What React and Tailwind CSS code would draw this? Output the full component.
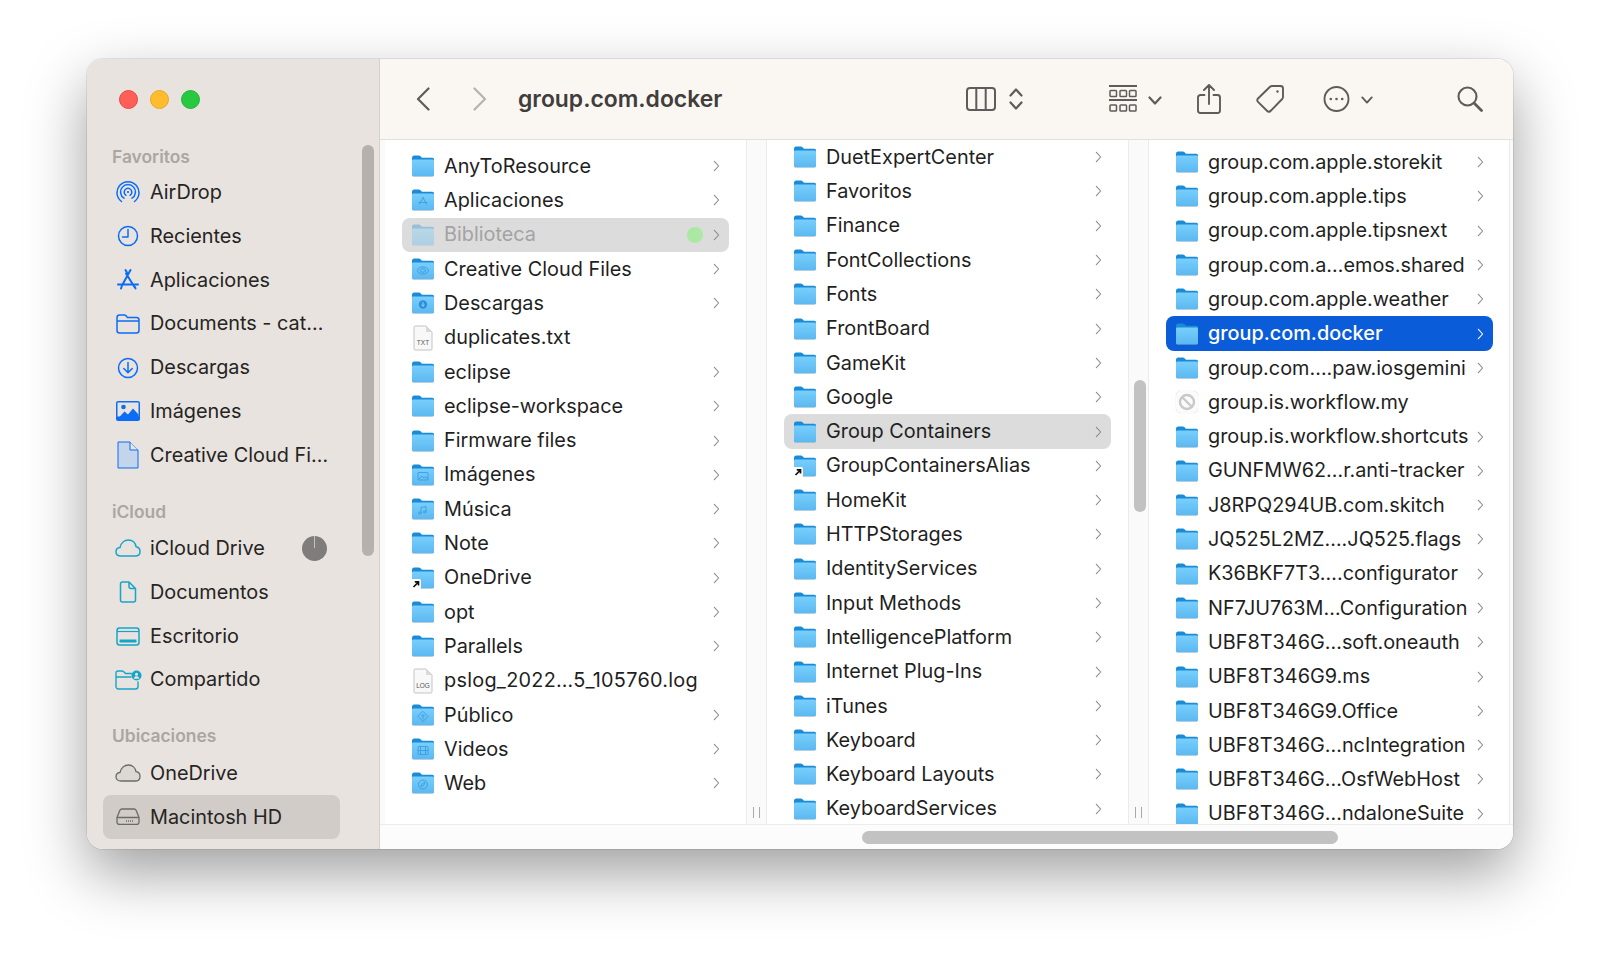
const col1 = [
  { name: 'AnyToResource' },
  { name: 'Aplicaciones', glyph: 'app' },
  { name: 'Biblioteca', state: 'dim' },
  { name: 'Creative Cloud Files', glyph: 'cc' },
  { name: 'Descargas', glyph: 'down' },
  { name: 'duplicates.txt', file: 'TXT' },
  { name: 'eclipse' },
  { name: 'eclipse-workspace' },
  { name: 'Firmware files' },
  { name: 'Imágenes', glyph: 'image' },
  { name: 'Música', glyph: 'music' },
  { name: 'Note' },
  { name: 'OneDrive', alias: true },
  { name: 'opt' },
  { name: 'Parallels' },
  { name: 'pslog_2022…5_105760.log', file: 'LOG', wide: true },
  { name: 'Público', glyph: 'public' },
  { name: 'Videos', glyph: 'film' },
  { name: 'Web', glyph: 'web' },
]

const col2 = [
  { name: 'DuetExpertCenter' },
  { name: 'Favoritos' },
  { name: 'Finance' },
  { name: 'FontCollections' },
  { name: 'Fonts' },
  { name: 'FrontBoard' },
  { name: 'GameKit' },
  { name: 'Google' },
  { name: 'Group Containers', state: 'gray' },
  { name: 'GroupContainersAlias', alias: true },
  { name: 'HomeKit' },
  { name: 'HTTPStorages' },
  { name: 'IdentityServices' },
  { name: 'Input Methods' },
  { name: 'IntelligencePlatform' },
  { name: 'Internet Plug-Ins' },
  { name: 'iTunes' },
  { name: 'Keyboard' },
  { name: 'Keyboard Layouts' },
  { name: 'KeyboardServices' },
]

const col3 = [
  { name: 'group.com.apple.storekit' },
  { name: 'group.com.apple.tips' },
  { name: 'group.com.apple.tipsnext' },
  { name: 'group.com.a…emos.shared' },
  { name: 'group.com.apple.weather' },
  { name: 'group.com.docker', state: 'blue' },
  { name: 'group.com….paw.iosgemini' },
  { name: 'group.is.workflow.my', blocked: true },
  { name: 'group.is.workflow.shortcuts' },
  { name: 'GUNFMW62…r.anti-tracker' },
  { name: 'J8RPQ294UB.com.skitch' },
  { name: 'JQ525L2MZ….JQ525.flags' },
  { name: 'K36BKF7T3….configurator' },
  { name: 'NF7JU763M…Configuration' },
  { name: 'UBF8T346G…soft.oneauth' },
  { name: 'UBF8T346G9.ms' },
  { name: 'UBF8T346G9.Office' },
  { name: 'UBF8T346G…ncIntegration' },
  { name: 'UBF8T346G…OsfWebHost' },
  { name: 'UBF8T346G…ndaloneSuite' },
]

const Glyph = ({ type }) => {
  const p = { fill: 'none', stroke: '#3a9be0', strokeWidth: 1, strokeLinecap: 'round', opacity: 0.85 }
  if (type === 'app') return <path {...p} d="M11 8.500 7.500 15M11 8.500l3.500 6.500M7 13.500h8" />
  if (type === 'cc') return <g {...p}><ellipse cx="11" cy="12.500" rx="5.500" ry="3.600" /><ellipse cx="11" cy="12.500" rx="2.600" ry="1.800" /></g>
  if (type === 'down') return <g><circle cx="11" cy="12.500" r="4.200" fill="#2f8fd8" /><path d="M11 10.200v4M9.400 12.800l1.600 1.500 1.600-1.500" fill="none" stroke="#8fd6fb" strokeWidth="1" /></g>
  if (type === 'image') return <g {...p}><rect x="6" y="8.500" width="10" height="7.500" rx="0.800" /><path d="m7 15 3-3 2 2 1.500-1.500L15.500 15" /></g>
  if (type === 'music') return <path {...p} d="M9 15V9.500l5-1V14M9 15a1.300 1 0 1 1-2.600 0 1.300 1 0 0 1 2.600 0ZM14 14a1.300 1 0 1 1-2.600 0 1.300 1 0 0 1 2.600 0Z" />
  if (type === 'public') return <g {...p}><path d="m11 7.500 5 5-5 5-5-5Z" /><path d="M11 15v-4.500M9.500 12l1.500-1.500 1.500 1.500" /></g>
  if (type === 'film') return <g {...p}><rect x="6" y="8.500" width="10" height="8" rx="0.800" /><path d="M6 12.500h10M8.500 8.500v8M13.500 8.500v8" /></g>
  if (type === 'web') return <g {...p}><circle cx="11" cy="12.500" r="4.500" /><path d="m13 10.500-1.200 2.800-2.800 1.200 1.200-2.800Z" /></g>
  return null
}

const Folder = ({ glyph, dim, alias }) => (
  <span className={`relative shrink-0 w-[22px] h-[22px] ${dim ? 'opacity-35' : ''}`}>
    <svg viewBox="0 0 22 22" width="22" height="22">
      <rect x="0.300" y="3" width="21.400" height="18.800" rx="1.500" fill="#9aa5ad" opacity="0.6" />
      <path d="M0 3.200C0 1.800.8 .6 2.200 .6h4.600c.8 0 1.200.2 1.700.7L10 2.800h10.300c1 0 1.700.7 1.700 1.700V8H0Z" fill="#1a8bd8" />
      <rect x="0" y="4.500" width="22" height="16.700" rx="1.300" fill="url(#folderfill)" />
      <Glyph type={glyph} />
    </svg>
    {alias && (
      <svg viewBox="0 0 10 10" width="10" height="10" className="absolute -left-px bottom-0">
        <rect width="10" height="10" rx="1.500" fill="#fff" />
        <path d="M2.500 8 7 3.500M3.800 2.800h3.700v3.700" fill="none" stroke="#111" strokeWidth="1.700" />
      </svg>
    )}
  </span>
)

const FileIcon = ({ label }) => (
  <span className="relative shrink-0 w-[22px] h-[26px] flex justify-center">
    <svg viewBox="0 0 20 26" width="20" height="26">
      <path d="M1 2.200C1 1.500 1.500 1 2.200 1H13l6 6v17c0 .6-.5 1-1 1H2.200c-.7 0-1.200-.4-1.200-1Z" fill="#f8f8f8" stroke="#bdbdbd" strokeWidth="0.900" />
      <path d="M13 1v5c0 .6.400 1 1 1h5Z" fill="#d9d9d9" />
    </svg>
    <span className="absolute bottom-[4px] left-0 right-0 text-center text-[6.500px] leading-none text-[#555555] font-['Liberation_Sans',sans-serif]">{label}</span>
  </span>
)

const BlockedIcon = () => (
  <span className="shrink-0 w-[22px] h-[22px] rounded-[5px] bg-[#fbfbfb] flex items-center justify-center shadow-[0_0_1px_rgba(0,0,0,0.25)]">
    <svg viewBox="0 0 18 18" width="18" height="18">
      <circle cx="9" cy="9" r="7" fill="none" stroke="#c9c9c9" strokeWidth="2.400" />
      <path d="m4.500 4.500 9 9" stroke="#c9c9c9" strokeWidth="2.400" />
    </svg>
  </span>
)

const Chevron = ({ white }) => (
  <svg viewBox="0 0 8 14" width="7" height="12" className="shrink-0">
    <path d="m1.500 1.500 5 5.500-5 5.500" fill="none" stroke={white ? '#ffffff' : '#8c8c8c'} strokeWidth="1.300" strokeLinecap="round" strokeLinejoin="round" />
  </svg>
)

function FileRow({ item, padRight }) {
  const { name, glyph, file, alias, blocked, state, wide } = item
  let rowBg = ''
  if (state === 'dim' || state === 'gray') rowBg = 'bg-[#dcdcdc] rounded-lg'
  if (state === 'blue') rowBg = 'bg-[#0b5cd9] rounded-lg'
  let textColor = 'text-[#1f1f1f]'
  if (state === 'dim') textColor = 'text-[#a3a3a3]'
  if (state === 'blue') textColor = 'text-white font-medium'

  return (
    <div className={`ml-[17px] h-[34.3px] flex items-center pl-[10px] ${padRight} ${rowBg}`}>
      {file ? <FileIcon label={file} /> : blocked ? <BlockedIcon /> : <Folder glyph={glyph} dim={state === 'dim'} alias={alias} />}
      <span className={`ml-[10px] pt-px flex-1 whitespace-nowrap text-[19.850px] ${wide ? 'tracking-[0.27px]' : ''} ${textColor}`}>{name}</span>
      {state === 'dim' && <span className="w-[16px] h-[16px] rounded-full bg-[#abe8a4] mr-[10px]" />}
      {!file && !blocked && <Chevron white={state === 'blue'} />}
    </div>
  )
}

function Column({ rows, className, padRight }) {
  return (
    <div className={`w-[361px] shrink-0 overflow-hidden bg-white ${className}`}>
      {rows.map((r) => <FileRow key={r.name} item={r} padRight={padRight} />)}
    </div>
  )
}

function Divider({ thumb }) {
  return (
    <div className="relative w-[21px] shrink-0 bg-[#fafafa] border-x border-[#ebebeb]">
      {thumb && <div className="absolute left-[5px] top-[240px] w-[12px] h-[132px] rounded-full bg-[#c2c2c2]" />}
      <div className="absolute left-[6px] bottom-[6px] w-[7px] h-[11px] border-x border-[#a9a9a9]" />
    </div>
  )
}

const blue = '#0b6cf6'
const teal = '#16a5c8'
const gray = '#6c6a68'

const SideIcon = ({ type }) => {
  const line = { fill: 'none', strokeLinecap: 'round', strokeLinejoin: 'round' }
  switch (type) {
    case 'airdrop':
      return (
        <svg viewBox="0 0 24 24" width="24" height="24" {...line} stroke={blue} strokeWidth="1.500">
          <path d="M5.500 21.500a11 11 0 1 1 13 0M8 18.200a7.400 7.400 0 1 1 8 0M9.900 15.300a3.800 3.800 0 1 1 4.200 0" />
          <circle cx="12" cy="12" r="1.100" fill={blue} stroke="none" />
        </svg>
      )
    case 'clock':
      return (
        <svg viewBox="0 0 24 24" width="24" height="24" {...line} stroke={blue} strokeWidth="1.500">
          <circle cx="12" cy="12" r="9.500" />
          <path d="M12 5.500V13H6.500" />
        </svg>
      )
    case 'apps':
      return (
        <svg viewBox="0 0 24 24" width="24" height="24" {...line} stroke={blue} strokeWidth="2">
          <path d="M9.500 2 11.500 5.500M14.500 2 6 17.500M10 5.500l8.500 13.500M2 16.500h20M6 17.500 5 20.500M19 19l.5 1.500" />
        </svg>
      )
    case 'folder':
      return (
        <svg viewBox="0 0 24 20" width="24" height="20" {...line} stroke={blue} strokeWidth="1.500">
          <path d="M1 3.500C1 2 2 1 3.500 1h4.800c.7 0 1.200.2 1.700.7L11.500 3.500h9c1.500 0 2.500 1 2.500 2.500v10.500c0 1.500-1 2.500-2.500 2.500h-17C2 19 1 18 1 16.500ZM1 7h22" />
        </svg>
      )
    case 'download':
      return (
        <svg viewBox="0 0 24 24" width="24" height="24" {...line} stroke={blue} strokeWidth="1.500">
          <circle cx="12" cy="12" r="9.500" />
          <path d="M12 6.500v10M7.800 12.500l4.200 4.200 4.200-4.200" />
        </svg>
      )
    case 'image':
      return (
        <svg viewBox="0 0 24 20" width="24" height="20">
          <rect x="0" y="0" width="24" height="20" rx="2" fill={blue} />
          <rect x="1.500" y="1.500" width="21" height="14" fill="#e8e3df" />
          <circle cx="7.500" cy="6" r="2.300" fill={blue} />
          <path d="M1.500 18 8.500 10.500l3.500 3 5-6 5.500 6V18Z" fill={blue} />
        </svg>
      )
    case 'ccfile':
      return (
        <svg viewBox="0 0 22 28" width="22" height="28">
          <path d="M1 1h12l8 8v18H1Z" fill="#c4d4ea" stroke={blue} strokeWidth="1" strokeLinejoin="round" />
          <path d="M13 1v8h8" fill="#e8e3df" stroke={blue} strokeWidth="1" strokeLinejoin="round" />
        </svg>
      )
    case 'cloud':
      return (
        <svg viewBox="0 0 26 18" width="26" height="18" {...line} stroke={teal} strokeWidth="1.500">
          <path d="M6 17c-3 0-5-1.800-5-4.300 0-2.300 1.700-4 4-4.200C6 4 9.500 1 13.500 1c4 0 7 2.800 7.500 6.700 2.400.3 4 2.200 4 4.700 0 2.800-2 4.600-5 4.600Z" />
        </svg>
      )
    case 'doc':
      return (
        <svg viewBox="0 0 18 22" width="18" height="22" {...line} stroke={teal} strokeWidth="1.500">
          <path d="M1.500 3c0-1.200.8-2 2-2H10l6.500 6.500V19c0 1.200-.8 2-2 2h-11c-1.200 0-2-.8-2-2ZM10 1v4.500c0 1.200.8 2 2 2h4.500" />
        </svg>
      )
    case 'desktop':
      return (
        <svg viewBox="0 0 24 19" width="24" height="19">
          <rect x="1" y="1" width="22" height="17" rx="2.500" fill="none" stroke={teal} strokeWidth="1.500" />
          <path d="M1 4.500h22" stroke={teal} strokeWidth="1.200" />
          <rect x="3.500" y="12.500" width="17" height="3" fill={teal} />
        </svg>
      )
    case 'shared':
      return (
        <svg viewBox="0 0 27 20" width="27" height="20" {...line}>
          <path d="M1 3c0-1.200.8-2 2-2h4c.7 0 1.200.2 1.700.7L10.500 3.500h6M1 7h15M23 12v4.500c0 1.400-1 2.500-2.500 2.500H3.500C2 19 1 18 1 16.500V3" stroke={teal} strokeWidth="1.400" />
          <circle cx="21.500" cy="5.500" r="5" fill={teal} />
          <circle cx="21.500" cy="4.200" r="1.500" fill="#e8e3df" />
          <path d="M18.800 8.800c.3-2 1.300-2.600 2.700-2.600s2.400.6 2.700 2.600Z" fill="#e8e3df" />
        </svg>
      )
    case 'onedrive':
      return (
        <svg viewBox="0 0 26 18" width="26" height="18" strokeLinejoin="round">
          <path d="M6 17c-3 0-5-1.800-5-4.300 0-2.300 1.700-4 4-4.200C6 4 9.500 1 13.500 1c4 0 7 2.800 7.500 6.700 2.400.3 4 2.200 4 4.700 0 2.800-2 4.600-5 4.600Z" fill="#dcd8d4" stroke={gray} strokeWidth="1.300" />
        </svg>
      )
    case 'disk':
      return (
        <svg viewBox="0 0 24 17" width="24" height="17" fill="none" stroke={gray} strokeWidth="1.300" strokeLinejoin="round">
          <path d="M6 1h12c1 0 1.700.5 2.100 1.300L23 9.500v4.500c0 1.500-1 2.500-2.500 2.500h-17C2 16.500 1 15.500 1 14V9.500l2.900-7.200C4.300 1.500 5 1 6 1Z" />
          <path d="M1.200 9.500h21.600" />
          <path d="M10 13h8" strokeDasharray="1 1" strokeWidth="1.600" />
        </svg>
      )
    default:
      return null
  }
}

function SideRow({ icon, label, active, children }) {
  return (
    <div className={`ml-4 w-[237px] h-[43.800px] flex items-center gap-1 pl-[7px] rounded-lg ${active ? 'bg-[#d1ccc8]' : ''}`}>
      <span className="w-[36px] flex justify-center shrink-0"><SideIcon type={icon} /></span>
      <span className="flex-1 pt-px text-[19.850px] text-[#262423] whitespace-nowrap">{label}</span>
      {children}
    </div>
  )
}

const SideHead = ({ children, className }) => (
  <div className={`pl-[25px] flex items-center text-[17.400px] font-semibold text-[#aaa6a3] ${className}`}>{children}</div>
)

function Sidebar() {
  return (
    <aside className="relative w-[293px] shrink-0 bg-[#e8e3df] border-r border-[#d6d1cd]">
      <div className="h-[83px] flex items-center gap-[12px] pl-[32px] pb-[3px]">
        <span className="w-[19px] h-[19px] rounded-full bg-[#ff5f57] border border-[#e5483f]" />
        <span className="w-[19px] h-[19px] rounded-full bg-[#febc2e] border border-[#e8a91f]" />
        <span className="w-[19px] h-[19px] rounded-full bg-[#28c840] border border-[#22b537]" />
      </div>
      <SideHead className="h-[28.500px] pt-px">Favoritos</SideHead>
      <SideRow icon="airdrop" label="AirDrop" />
      <SideRow icon="clock" label="Recientes" />
      <SideRow icon="apps" label="Aplicaciones" />
      <SideRow icon="folder" label="Documents - cat…" />
      <SideRow icon="download" label="Descargas" />
      <SideRow icon="image" label="Imágenes" />
      <SideRow icon="ccfile" label="Creative Cloud Fi…" />
      <SideHead className="h-[28px] mt-[21.500px] pb-[2px]">iCloud</SideHead>
      <SideRow icon="cloud" label="iCloud Drive">
        <span className="relative w-[25px] h-[25px] rounded-full bg-[#7f7d7b] mr-[13px] shrink-0">
          <span className="absolute left-[12px] top-0 w-px h-[12px] bg-[#c4c2c0]" />
        </span>
      </SideRow>
      <SideRow icon="doc" label="Documentos" />
      <SideRow icon="desktop" label="Escritorio" />
      <SideRow icon="shared" label="Compartido" />
      <SideHead className="h-[28px] mt-[21.500px] pb-[3px]">Ubicaciones</SideHead>
      <SideRow icon="onedrive" label="OneDrive" />
      <SideRow icon="disk" label="Macintosh HD" active />
      <div className="absolute left-[275px] top-[86px] w-[12px] h-[411px] rounded-full bg-[#b6b1ad]" />
    </aside>
  )
}

function Toolbar() {
  const stroke = { fill: 'none', stroke: '#5f5b58', strokeWidth: 2, strokeLinecap: 'round', strokeLinejoin: 'round' }
  return (
    <header className="h-[81px] shrink-0 flex items-center bg-[#faf6f2] border-b border-[#e3e0dd] pb-px">
      <svg viewBox="0 0 14 24" width="14" height="24" className="ml-[36px]" {...stroke} strokeWidth="2.200"><path d="M12.500 1.500 2 12l10.500 10.500" /></svg>
      <svg viewBox="0 0 14 24" width="14" height="24" className="ml-[43px]" {...stroke} stroke="#b5b2af" strokeWidth="2.200"><path d="M1.500 1.500 12 12 1.500 22.500" /></svg>
      <h1 className="ml-[31px] w-[448px] shrink-0 pt-px text-[22.900px] font-semibold text-[#403d3b] whitespace-nowrap">group.com.docker</h1>
      <svg viewBox="0 0 30 24" width="30" height="24" {...stroke}><rect x="1" y="1" width="28" height="22" rx="3" /><path d="M10.300 1v22M19.700 1v22" /></svg>
      <svg viewBox="0 0 14 22" width="14" height="22" className="ml-[13px]" {...stroke} strokeWidth="2.200"><path d="m1.500 7.500 5.500-6 5.500 6M1.500 14.500l5.500 6 5.500-6" /></svg>
      <svg viewBox="0 0 28 28" width="28" height="28" className="ml-[86px]" fill="none" stroke="#5f5b58" strokeWidth="1.500">
        <path d="M0 1h28M0 15h28" strokeWidth="1.800" />
        <rect x="1" y="5.500" width="6.500" height="6" rx="0.800" /><rect x="11" y="5.500" width="6.500" height="6" rx="0.800" /><rect x="20.500" y="5.500" width="6.500" height="6" rx="0.800" />
        <rect x="1" y="20" width="6.500" height="6" rx="0.800" /><rect x="11" y="20" width="6.500" height="6" rx="0.800" /><rect x="20.500" y="20" width="6.500" height="6" rx="0.800" />
      </svg>
      <svg viewBox="0 0 14 9" width="14" height="9" className="ml-[11px] mt-[3px]" {...stroke} strokeWidth="2.200"><path d="m1.500 1.500 5.500 6 5.500-6" /></svg>
      <svg viewBox="0 0 24 30" width="24" height="30" className="ml-[35px]" {...stroke} strokeWidth="1.900"><path d="M7.500 11H3.500C2 11 1 12 1 13.500V26.500C1 28 2 29 3.500 29h17c1.500 0 2.500-1 2.500-2.500V13.500C23 12 22 11 20.500 11H16.500M12 20V1.500M7 6l5-5 5 5" /></svg>
      <svg viewBox="0 0 30 30" width="30" height="30" className="ml-[34px]" {...stroke} strokeWidth="1.900"><path d="M17 2h8.500C27.300 2 28 2.800 28 4.500V13c0 .8-.3 1.400-.8 2L15.500 27c-1 1-2.300 1-3.300 0L3 17.800c-1-1-1-2.300 0-3.300L15 2.800C15.600 2.300 16.200 2 17 2Z" /><circle cx="22.500" cy="7.500" r="1.200" fill="#5f5b58" stroke="none" /></svg>
      <svg viewBox="0 0 27 26" width="27" height="26" className="ml-[38px]" {...stroke} strokeWidth="1.900"><circle cx="13.500" cy="13" r="12" /><circle cx="7.800" cy="13" r="1.300" fill="#5f5b58" stroke="none" /><circle cx="13.500" cy="13" r="1.300" fill="#5f5b58" stroke="none" /><circle cx="19.200" cy="13" r="1.300" fill="#5f5b58" stroke="none" /></svg>
      <svg viewBox="0 0 14 9" width="12" height="8" className="ml-[11px] mt-[3px]" {...stroke} strokeWidth="2.200"><path d="m1.500 1.500 5.500 6 5.500-6" /></svg>
      <svg viewBox="0 0 26 26" width="26" height="26" className="ml-[84px]" {...stroke} strokeWidth="2.100"><circle cx="10.500" cy="10.500" r="9" /><path d="m17.500 17.500 7 7" strokeWidth="2.800" /></svg>
    </header>
  )
}

export default function App() {
  return (
    <div className="w-[1600px] h-[964px] bg-white overflow-hidden pt-[59px] pl-[87px] font-['Inter','Liberation_Sans',sans-serif]">
      <svg className="absolute w-0 h-0">
        <defs>
          <linearGradient id="folderfill" x1="0" y1="0" x2="0" y2="1">
            <stop offset="0" stopColor="#78cffc" />
            <stop offset="1" stopColor="#5cb8f1" />
          </linearGradient>
        </defs>
      </svg>
      <div className="w-[1426px] h-[790px] flex rounded-[16px] overflow-hidden bg-white shadow-[0_24px_60px_rgba(0,0,0,0.38),0_0_0_1px_rgba(0,0,0,0.08)]">
        <Sidebar />
        <main className="flex-1 min-w-0 flex flex-col">
          <Toolbar />
          <div className="h-[685px] flex overflow-hidden bg-[#fafafa] pl-[5px] border-b border-[#ececec]">
            <Column rows={col1} className="pt-[9px]" padRight="mr-[17px] pr-[9px]" />
            <Divider />
            <Column rows={col2} padRight="mr-[17px] pr-[9px]" />
            <Divider thumb />
            <Column rows={col3} className="pt-[5px] border-r border-[#ebebeb]" padRight="mr-[16px] pr-[9px]" />
          </div>
          <div className="flex-1 bg-[#fcfcfc] pt-[6px]">
            <div className="ml-[482px] w-[476px] h-[13px] rounded-full bg-[#c2c2c2]" />
          </div>
        </main>
      </div>
    </div>
  )
}
